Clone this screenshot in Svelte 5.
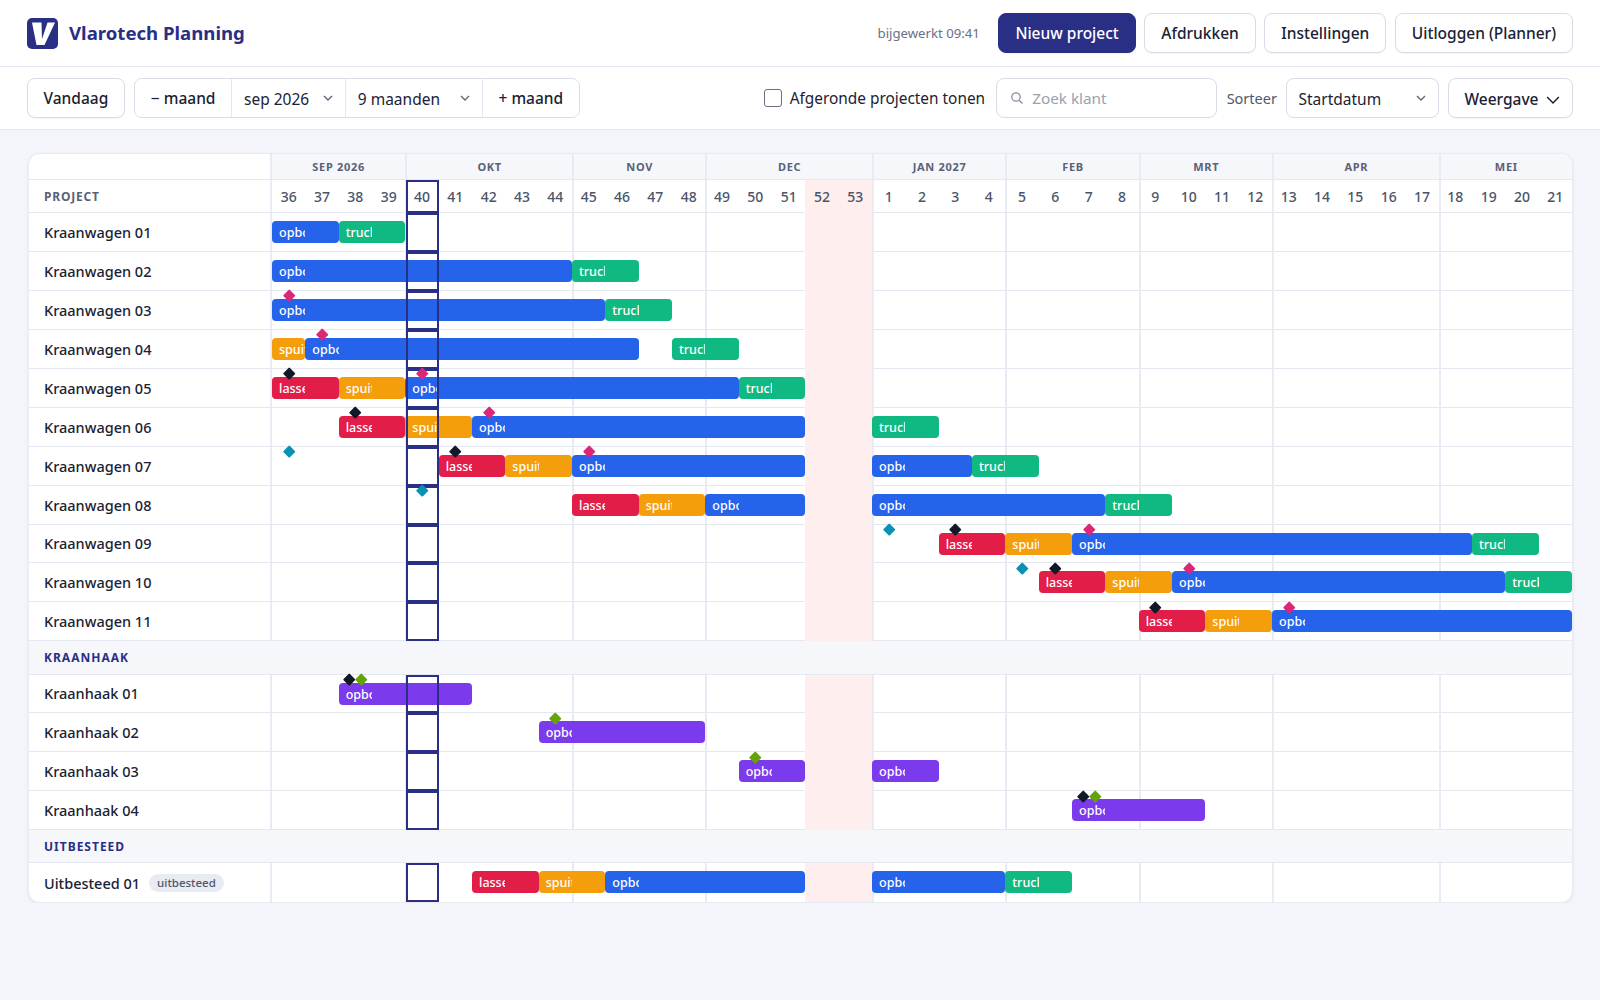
<script>
  const months = [['SEP 2026',4],['OKT',5],['NOV',4],['DEC',5],['JAN 2027',4],['FEB',4],['MRT',4],['APR',5],['MEI',4]];
  const weeks = [...Array(18).keys()].map(i=>i+36).concat([...Array(21).keys()].map(i=>i+1));
  const W = 39;
  let acc = 0;
  const dividers = months.map(m => { const a = acc; acc += m[1]; return a; }).slice(1);
  const T = { l:['lassen','red'], s:['spuiten','amber'], o:['opbouw','blue'], t:['truck','green'], p:['opbouw','purple'] };
  const wagons = [
    [[['o',0,2],['t',2,4]],[]],
    [[['o',0,9],['t',9,11]],[]],
    [[['o',0,10],['t',10,12]],[['pink',0]]],
    [[['s',0,1],['o',1,11],['t',12,14]],[['pink',1]]],
    [[['l',0,2],['s',2,4],['o',4,14],['t',14,16]],[['black',0],['pink',4]]],
    [[['l',2,4],['s',4,6],['o',6,16],['t',18,20]],[['black',2],['pink',6]]],
    [[['l',5,7],['s',7,9],['o',9,16],['o',18,21],['t',21,23]],[['teal',0],['black',5],['pink',9]]],
    [[['l',9,11],['s',11,13],['o',13,16],['o',18,25],['t',25,27]],[['teal',4]]],
    [[['l',20,22],['s',22,24],['o',24,36],['t',36,38]],[['teal',18],['black',20],['pink',24]]],
    [[['l',23,25],['s',25,27],['o',27,37],['t',37,39]],[['teal',22],['black',23],['pink',27]]],
    [[['l',26,28],['s',28,30],['o',30,39]],[['black',26],['pink',30]]],
  ];
  const sections = [
    { rows: wagons.map((r,i)=>({ name:`Kraanwagen ${String(i+1).padStart(2,'0')}`, bars:r[0], marks:r[1] })) },
    { title:'KRAANHAAK', rows:[
      { name:'Kraanhaak 01', bars:[['p',2,6]], marks:[['black',2,-6],['lime',2,6]] },
      { name:'Kraanhaak 02', bars:[['p',8,13]], marks:[['lime',8]] },
      { name:'Kraanhaak 03', bars:[['p',14,16],['p',18,20]], marks:[['lime',14]] },
      { name:'Kraanhaak 04', bars:[['p',24,28]], marks:[['black',24,-6],['lime',24,6]] },
    ]},
    { title:'UITBESTEED', rows:[
      { name:'Uitbesteed 01', pill:'uitbesteed', bars:[['l',6,8],['s',8,10],['o',10,16],['o',18,22],['t',22,24]], marks:[] },
    ]},
  ];
  const pct = n => (n / W * 100) + '%';
</script>

<header class="top">
  <div class="brand">
    <svg class="logo" viewBox="0 0 31 31" width="31" height="31" aria-hidden="true">
      <rect width="31" height="31" rx="5" fill="#2a2f86"/>
      <path d="M5 4.5H14.5L15 21L20.5 4.5H28L17.5 27H9.5Z" fill="#fff"/>
    </svg>
    <span class="title">Vlarotech Planning</span>
  </div>
  <div class="actions">
    <span class="updated">bijgewerkt 09:41</span>
    <button class="btn primary">Nieuw project</button>
    <button class="btn">Afdrukken</button>
    <button class="btn">Instellingen</button>
    <button class="btn">Uitloggen (Planner)</button>
  </div>
</header>

<div class="toolbar">
  <button class="btn tb">Vandaag</button>
  <div class="group">
    <button class="seg btn-seg">− maand</button>
    <div class="seg sel w1"><span>sep 2026</span><svg class="chev" viewBox="0 0 12 12"><path d="M2 4l4 4 4-4"/></svg></div>
    <div class="seg sel w2"><span>9 maanden</span><svg class="chev" viewBox="0 0 12 12"><path d="M2 4l4 4 4-4"/></svg></div>
    <button class="seg btn-seg">+ maand</button>
  </div>
  <div class="spacer"></div>
  <label class="check"><input type="checkbox" /><span>Afgeronde projecten tonen</span></label>
  <div class="search">
    <svg viewBox="0 0 14 14" width="14" height="14"><circle cx="6" cy="6" r="4.2"/><path d="M9.2 9.2L12.5 12.5"/></svg>
    <input placeholder="Zoek klant" />
  </div>
  <span class="sortlabel">Sorteer</span>
  <div class="field sel"><span>Startdatum</span><svg class="chev" viewBox="0 0 12 12"><path d="M2 4l4 4 4-4"/></svg></div>
  <button class="btn tb view">Weergave <svg class="chev dark" viewBox="0 0 12 12"><path d="M1 3.5l5 5 5-5"/></svg></button>
</div>

<main class="page">
  <section class="card">
    <div class="row head-months">
      <div class="name"></div>
      <div class="tl months">
        {#each months as m}
          <div class="month" style="width:{pct(m[1])}">{m[0]}</div>
        {/each}
      </div>
    </div>
    <div class="row head-weeks">
      <div class="name proj">PROJECT</div>
      <div class="tl weeks">
        <div class="holiday" style="left:{pct(16)};width:{pct(2)}"></div>
        {#each dividers as d}<div class="div" style="left:{pct(d)}"></div>{/each}
        {#each weeks as w}<div class="wk">{w}</div>{/each}
        <div class="today" style="left:{pct(4)};width:{pct(1)}"></div>
      </div>
    </div>
    {#each sections as s}
      {#if s.title}<div class="section">{s.title}</div>{/if}
      {#each s.rows as r}
        <div class="row item">
          <div class="name">{r.name}{#if r.pill}<span class="pill">{r.pill}</span>{/if}</div>
          <div class="tl">
            <div class="holiday" style="left:{pct(16)};width:{pct(2)}"></div>
            {#each dividers as d}<div class="div" style="left:{pct(d)}"></div>{/each}
            {#each r.bars as b}
              <div class="bar {T[b[0]][1]}" style="left:{pct(b[1])};width:{pct(b[2]-b[1])}">
                <span class="lbl" style="width:{100/(b[2]-b[1])}%">{T[b[0]][0]}</span>
              </div>
            {/each}
            <div class="today" style="left:{pct(4)};width:{pct(1)}"></div>
            {#each r.marks as m}
              <div class="mark {m[0]}" style="left:calc({pct(m[1]+0.5)} + {m[2]||0}px)"></div>
            {/each}
          </div>
        </div>
      {/each}
    {/each}
  </section>
</main>

<style>
  :global(body) { margin:0; background:#f3f5fa; font-family:"Noto Sans",sans-serif; color:#1a2233; }
  button { font-family:inherit; cursor:pointer; }
  .top { height:67px; box-sizing:border-box; background:#fff; border-bottom:1px solid #e5e8f0; display:flex; align-items:center; justify-content:space-between; padding:0 27px; }
  .brand { display:flex; align-items:center; gap:11px; }
  .logo { display:block; }
  .title { font-size:18.6px; font-weight:700; color:#2a2f86; padding-bottom:2px; }
  .actions { display:flex; align-items:center; gap:8.5px; }
  .updated { font-size:13.2px; color:#687185; margin-right:10px; }
  .btn { height:40px; padding:0 16px; background:#fff; border:1px solid #d8dce6; border-radius:8px; font-size:15.5px; font-weight:500; color:#1a2233; box-shadow:0 1px 1px rgba(20,30,60,.04); }
  .btn.primary { background:#2a2f86; border-color:#2a2f86; color:#fff; }
  .toolbar { height:63px; box-sizing:border-box; background:#fff; border-bottom:1px solid #e5e8f0; display:flex; align-items:center; gap:9.5px; padding:0 27px; }
  .spacer { flex:1; }
  .group { display:flex; width:446px; height:40px; border:1px solid #d8dce6; border-radius:8px; box-sizing:border-box; background:#fff; overflow:hidden; }
  .seg { display:flex; align-items:center; border:0; border-right:1px solid #e5e8f0; background:#fff; font-size:15.5px; box-sizing:border-box; }
  .seg:last-child { border-right:0; }
  .btn-seg { width:97px; justify-content:center; padding:0; font-weight:500; color:#1a2233; }
  .sel { justify-content:space-between; padding:0 11px 0 12px; }
  .sel span { padding-top:2px; }
  .w1 { width:114px; } .w2 { width:137px; }
  .chev { width:12px; height:12px; fill:none; stroke:#5b6478; stroke-width:1.3; flex:none; }
  .chev.dark { stroke:#1a2233; width:14px; height:14px; vertical-align:-2px; margin-left:3px; }
  .tb { padding:0 15.5px; }
  .check { display:flex; align-items:center; gap:8px; font-size:15.4px; color:#1a2233; margin-right:1.5px; }
  .check input { appearance:none; margin:0; width:18px; height:18px; border:1.5px solid #687185; border-radius:3px; background:#fff; }
  .search { width:221px; height:40px; box-sizing:border-box; border:1px solid #d8dce6; border-radius:8px; display:flex; align-items:center; gap:8px; padding:0 13px; background:#fff; }
  .search svg { fill:none; stroke:#8a92a3; stroke-width:1.3; flex:none; }
  .search input { border:0; outline:0; flex:1; min-width:0; font:inherit; font-size:15.3px; padding:0; color:#1a2233; }
  .search input::placeholder { color:#9aa1b0; opacity:1; }
  .sortlabel { font-size:14.5px; color:#4f586c; }
  .field { width:153px; height:40px; box-sizing:border-box; border:1px solid #d8dce6; border-radius:8px; display:flex; align-items:center; font-size:15.5px; background:#fff; margin-right:-1px; padding-left:11px; }
  .view { padding:2px 12.5px 0 15.5px; }
  .page { padding:23px 27px 0 28px; }
  .card { background:#fff; border:1px solid #e8ebf2; border-radius:12px; overflow:hidden; box-shadow:0 1px 3px rgba(20,30,60,.08); }
  .row { display:grid; grid-template-columns:243px 1fr; border-bottom:1px solid #e5e8f0; box-sizing:border-box; }
  .name { display:flex; align-items:center; padding-left:15px; border-right:2px solid #e8ebf3; font-size:14.5px; font-weight:500; color:#1a2233; white-space:nowrap; }
  .tl { position:relative; min-width:0; }
  .head-months { height:26px; }
  .months { display:flex; background:#f6f7fb; }
  .month { box-sizing:border-box; border-left:2px solid #e8ebf3; display:flex; align-items:center; justify-content:center; font-size:11px; font-weight:700; letter-spacing:.7px; color:#596276; }
  .month:first-child { border-left:0; }
  .head-weeks { height:33px; }
  .proj { font-size:12px; font-weight:700; letter-spacing:.8px; color:#596276; }
  .weeks { display:grid; grid-template-columns:repeat(39,1fr); }
  .wk { position:relative; display:flex; align-items:center; justify-content:center; font-size:14px; font-weight:500; color:#4b5468; }
  .item { height:38.95px; }
  .item:last-child { border-bottom:0; }
  .section { height:33.2px; box-sizing:border-box; background:#f6f7fb; border-bottom:1px solid #e5e8f0; display:flex; align-items:center; padding-left:15px; font-size:12px; font-weight:700; letter-spacing:1px; color:#2a2f86; }
  .holiday { position:absolute; top:0; bottom:-1px; background:#ffeeee; }
  .div { position:absolute; top:0; bottom:-1px; width:2px; background:#e8ebf3; }
  .today { position:absolute; top:0; bottom:-1px; box-sizing:border-box; border:2px solid #2a2f86; z-index:2; margin-left:.5px; }
  .item:last-child .today { bottom:0; }
  .bar { position:absolute; top:8px; height:22px; border-radius:4px; overflow:hidden; }
  .lbl { display:block; box-sizing:border-box; padding-left:7px; overflow:hidden; white-space:nowrap; line-height:24px; height:22px; font-size:12.5px; font-weight:500; color:#fff; }
  .blue { background:#2563eb; } .green { background:#10b981; } .amber { background:#f59e0b; } .red { background:#e11d48; } .purple { background:#7c3aed; }
  .mark { position:absolute; top:.5px; width:8.5px; height:8.5px; margin-left:-4px; transform:rotate(45deg); z-index:3; border-radius:1px; }
  .pink { background:#db2777; } .black { background:#111827; } .teal { background:#0891b2; } .lime { background:#65a30d; }
  .pill { margin-left:8.5px; height:18px; padding:0 8.5px; border-radius:9px; background:#e8ebf2; font-size:11.5px; font-weight:500; color:#4f586c; display:inline-flex; align-items:center; }
</style>
